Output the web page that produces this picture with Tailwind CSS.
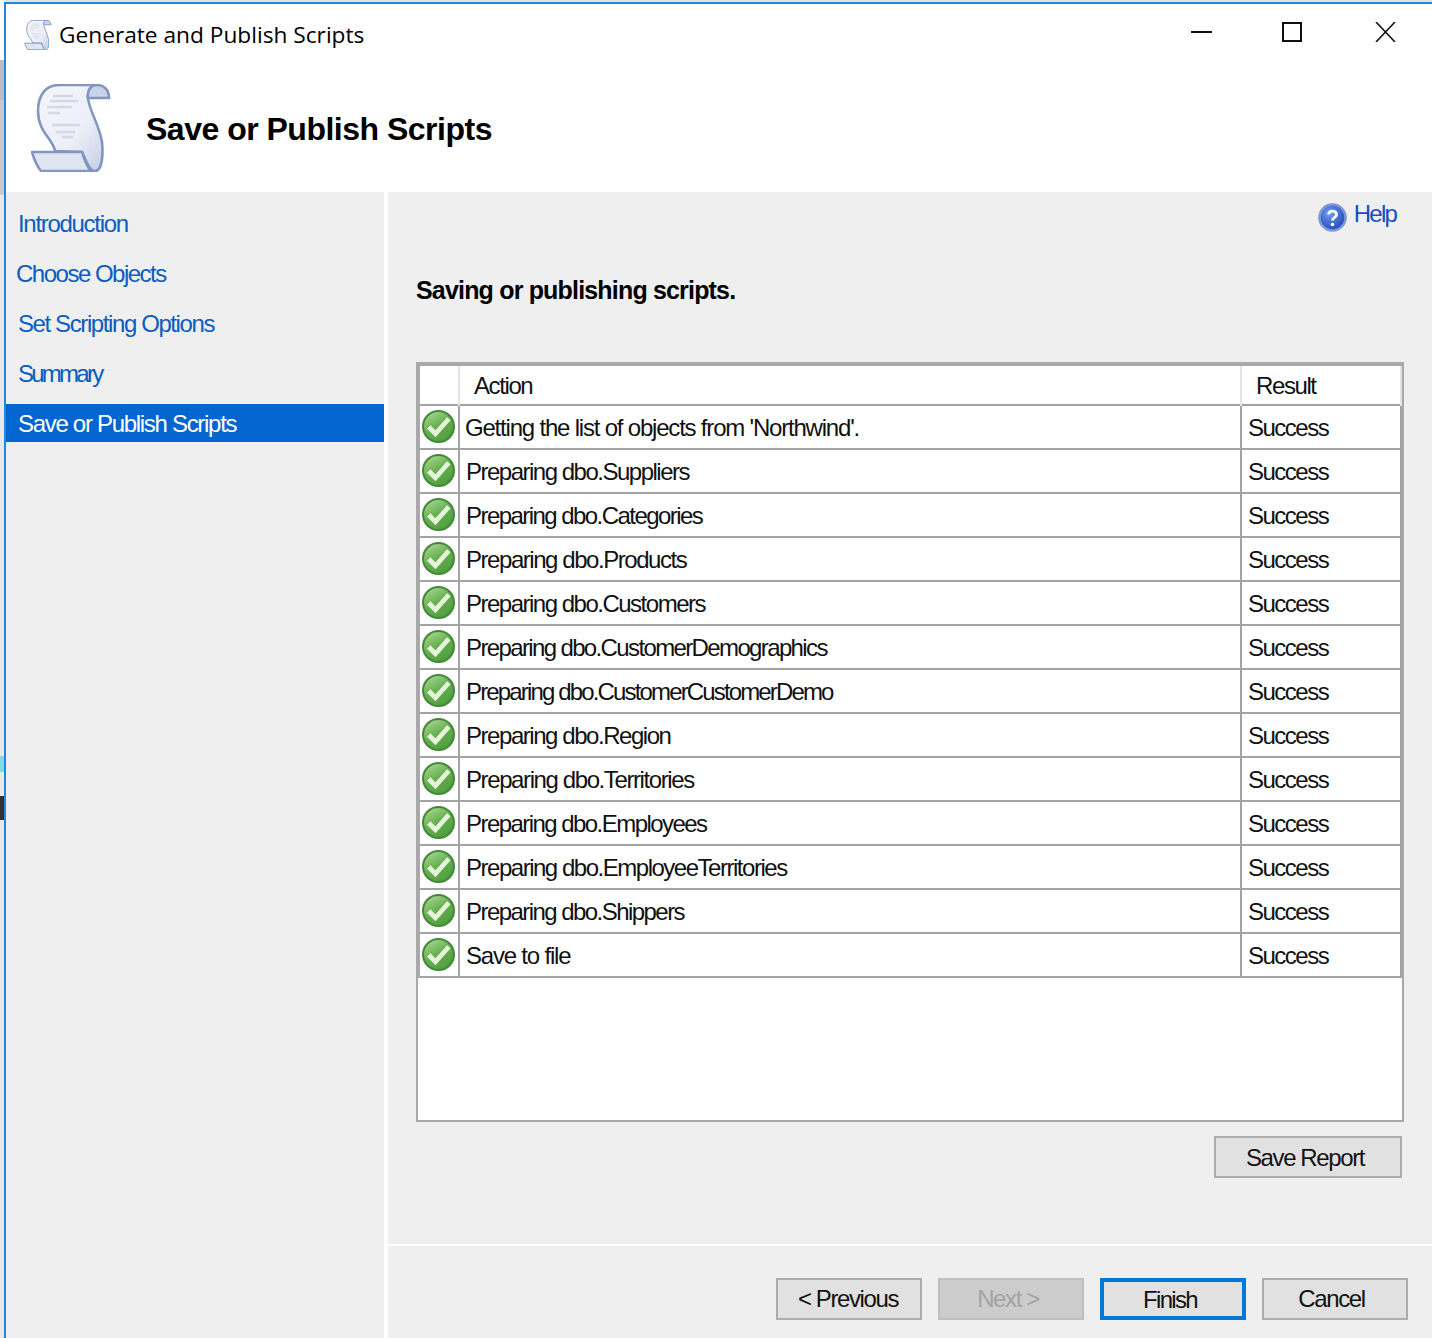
<!DOCTYPE html>
<html lang="en">
<head>
    <meta charset="UTF-8">
    <title>Generate and Publish Scripts</title>
    <script src="https://cdn.jsdelivr.net/npm/@tailwindcss/browser@4"></script>
</head>
<body class="bg-[#e4e4e4]">
    <svg width="0" height="0" class="absolute">
        <defs>
            <linearGradient id="scrollFill" x1="0" y1="0" x2="1" y2="1">
                <stop offset="0" stop-color="#f4f6fb"/>
                <stop offset="0.6" stop-color="#eceff7"/>
                <stop offset="1" stop-color="#c3cde4"/>
            </linearGradient>
            <linearGradient id="okFill" x1="0.2" y1="0" x2="0.8" y2="1">
                <stop offset="0" stop-color="#a8d892"/>
                <stop offset="0.5" stop-color="#62ad4c"/>
                <stop offset="1" stop-color="#4f9a3c"/>
            </linearGradient>
            <radialGradient id="helpFill" cx="0.4" cy="0.35" r="0.7">
                <stop offset="0" stop-color="#6f9bf0"/>
                <stop offset="1" stop-color="#1c47b8"/>
            </radialGradient>
            <symbol id="scroll" viewBox="0 0 80 88">
                <path d="M24 67C22 55 7 48 7 27 7 12 14 1 28 1L66 1C60 1 56 6 57 14 58 26 68 40 71 58 72 68 72 87 64 87 58 87 56 78 51 68Z" fill="url(#scrollFill)" stroke="#8296bf" stroke-width="2.6"/>
                <path d="M66 1C73 1 78 6 78 14L57 14C56 6 60 1 66 1Z" fill="#c9d3e9" stroke="#8296bf" stroke-width="2.6"/>
                <path d="M1 68L51 68C53 75 55 82 60 87L10 87C6 82 3 75 1 68Z" fill="#dfe5f2" stroke="#8296bf" stroke-width="2.6"/>
                <path d="M22 12H42M19 17H47M16 23H41M17 29H29M21 41H49M25 48H44M31 53H42" stroke="#d3d8e3" stroke-width="2.6" fill="none"/>
            </symbol>
            <symbol id="ok" viewBox="0 0 32 32">
                <circle cx="16" cy="16" r="15" fill="url(#okFill)" stroke="#44893a" stroke-width="2"/>
                <path d="M6.5 16.5L13 23L26 8.5" fill="none" stroke="#e6f4de" stroke-width="4.6"/>
            </symbol>
        </defs>
    </svg>

    <!-- bits of whatever sits behind the dialog -->
    <div class="absolute left-0 top-0 w-[4px] h-[1338px] flex flex-col bg-[#e8e8e8]">
        <div class="h-[60px] bg-white"></div>
        <div class="h-[40px] bg-[#bdbdc9]"></div>
        <div class="h-[95px] bg-[#cacaca]"></div>
        <div class="h-[561px]"></div>
        <div class="h-[16px] bg-[#7fdce0]"></div>
        <div class="h-[24px]"></div>
        <div class="h-[24px] bg-[#333333]"></div>
    </div>

    <div class="relative w-[1432px] h-[1338px] pl-[4px] pt-[2px] overflow-hidden">
        <div class="h-full border-l-2 border-t-2 border-[#1e88e0] bg-white flex flex-col">
            <!-- Title bar -->
            <div class="h-[60px] flex items-center justify-between pl-[18px] pr-[36px] shrink-0">
                <div class="flex items-center gap-[7px] pt-[2px]">
                    <svg class="w-[28px] h-[30px] blur-[0.3px]"><use href="#scroll"/></svg>
                    <span class="text-[22.7px] text-black font-['Open_Sans',sans-serif]">Generate and Publish Scripts</span>
                </div>
                <div class="flex items-center gap-[70px] pb-[4px]">
                    <svg width="21" height="20" viewBox="0 0 21 20"><path d="M0 10H21" stroke="#111" stroke-width="2"/></svg>
                    <svg width="20" height="20" viewBox="0 0 20 20"><rect x="1" y="1" width="18" height="18" fill="none" stroke="#111" stroke-width="2"/></svg>
                    <svg width="21" height="20" viewBox="0 0 21 20" class="ml-[3px]"><path d="M1 0L20 20M20 0L1 20" stroke="#111" stroke-width="1.6"/></svg>
                </div>
            </div>

            <!-- Header -->
            <div class="h-[128px] flex items-center pl-[25px] shrink-0">
                <svg class="w-[80px] h-[88px] blur-[0.5px]"><use href="#scroll"/></svg>
                <h1 class="ml-[35px] mt-[2px] text-[32px] font-bold tracking-[-0.5px] text-black font-['Liberation_Sans',sans-serif]">Save or Publish Scripts</h1>
            </div>

            <div class="flex-1 flex font-['Liberation_Sans',sans-serif] text-[24px] tracking-[-1.4px]">
                <!-- Sidebar -->
                <nav class="w-[378px] bg-[#efefef] pt-[12px] flex flex-col gap-[12px] text-[#0a5cc2]">
                    <a class="h-[38px] leading-[40px] pl-[12px] tracking-[-1.3px]">Introduction</a>
                    <a class="h-[38px] leading-[40px] pl-[10px] tracking-[-1.5px]">Choose Objects</a>
                    <a class="h-[38px] leading-[40px] pl-[12px] tracking-[-1.4px]">Set Scripting Options</a>
                    <a class="h-[38px] leading-[40px] pl-[12px] tracking-[-2.75px]">Summary</a>
                    <a class="h-[38px] leading-[40px] pl-[12px] tracking-[-1.3px] bg-[#0366d0] text-white">Save or Publish Scripts</a>
                </nav>

                <!-- Main -->
                <main class="ml-[4px] flex-1 flex flex-col bg-[#efefef]">
                    <div class="h-[1054px] border-b-2 border-white pl-[28px] pr-[28px] flex flex-col">
                        <div class="h-[46px] pt-[8px] pr-[8px] flex justify-end items-start">
                            <div class="flex items-center gap-[7px] text-[#1a4dc4]">
                                <svg width="29" height="29" viewBox="0 0 29 29" class="mt-[2px]">
                                    <circle cx="14.5" cy="14.5" r="13" fill="url(#helpFill)" stroke="#7d97d2" stroke-width="2.6"/>
                                    <path d="M10.5 11.5C10.5 7 18.5 7 18.5 11.5C18.5 14.5 14.5 14.5 14.5 17.5" fill="none" stroke="#fff" stroke-width="2.8"/>
                                    <circle cx="14.5" cy="21.5" r="1.8" fill="#fff"/>
                                </svg>
                                <span class="leading-[28px] mb-[4px] tracking-[-1.8px]">Help</span>
                            </div>
                        </div>
                        <p class="mt-[35px] h-[34px] leading-[34px] text-[25px] font-bold tracking-[-0.82px] text-black">Saving or publishing scripts.</p>

                        <!-- Results table -->
                        <div class="mt-[55px] w-[988px] h-[760px] bg-white border-2 border-[#a9a9a9] text-[#111]">
                            <div class="w-[984px] border-t-2 border-l-2 border-[#a9a9a9]">
                                <div class="h-[40px] grid grid-cols-[40px_782px_160px] border-b-2 border-[#a3a3a3]">
                                    <div class="border-r-2 border-[#e4e4e4]"></div>
                                    <div class="border-r-2 border-[#e4e4e4] pl-[14px] leading-[40px]">Action</div>
                                    <div class="pl-[14px] leading-[40px] border-r-2 border-[#e4e4e4]">Result</div>
                                </div>
                                <div id="rows"></div>
                            </div>
                        </div>

                        <div class="mt-[14px] flex justify-end pr-[2px]">
                            <button class="w-[188px] h-[42px] pr-[6px] pt-[1px] bg-[#e1e1e1] border-2 border-[#adadad] text-[#111]">Save Report</button>
                        </div>
                    </div>

                    <div class="flex justify-end gap-[16px] pt-[32px] pr-[24px] text-[#111]">
                        <button class="w-[146px] h-[42px] pr-[2px] bg-[#e1e1e1] border-2 border-[#adadad]">&lt; Previous</button>
                        <button class="w-[146px] h-[42px] pr-[6px] bg-[#cccccc] border-2 border-[#bfbfbf] text-[#a3a3a3]">Next &gt;</button>
                        <button class="w-[146px] h-[42px] pr-[6px] bg-[#e1e1e1] border-4 border-[#0078d7] tracking-[-1.7px]">Finish</button>
                        <button class="w-[146px] h-[42px] pr-[7px] bg-[#e1e1e1] border-2 border-[#adadad]">Cancel</button>
                    </div>
                </main>
            </div>
        </div>
    </div>

    <script>
        const actions = [
            ["Getting the list of objects from 'Northwind'.", "pl-[5px] tracking-[-1.2px]"],
            ["Preparing dbo.Suppliers", "pl-[6px] tracking-[-1.5px]"],
            ["Preparing dbo.Categories", "pl-[6px] tracking-[-1.55px]"],
            ["Preparing dbo.Products", "pl-[6px] tracking-[-1.45px]"],
            ["Preparing dbo.Customers", "pl-[6px] tracking-[-1.5px]"],
            ["Preparing dbo.CustomerDemographics", "pl-[6px] tracking-[-1.63px]"],
            ["Preparing dbo.CustomerCustomerDemo", "pl-[6px] tracking-[-1.85px]"],
            ["Preparing dbo.Region", "pl-[6px] tracking-[-1.45px]"],
            ["Preparing dbo.Territories", "pl-[6px] tracking-[-1.4px]"],
            ["Preparing dbo.Employees", "pl-[6px] tracking-[-1.55px]"],
            ["Preparing dbo.EmployeeTerritories", "pl-[6px] tracking-[-1.48px]"],
            ["Preparing dbo.Shippers", "pl-[6px] tracking-[-1.55px]"],
            ["Save to file", "pl-[6px] tracking-[-1.2px]"]
        ];
        document.getElementById('rows').innerHTML = actions.map(([action, cls]) => `
            <div class="h-[44px] grid grid-cols-[40px_782px_160px] border-b-2 border-[#a3a3a3]">
                <div class="border-r-2 border-[#a3a3a3] pl-[2px] pt-[4px]">
                    <svg class="w-[33px] h-[33px]"><use href="#ok"/></svg>
                </div>
                <div class="border-r-2 border-[#a3a3a3] leading-[44px] whitespace-nowrap ${cls}">${action}</div>
                <div class="border-r-2 border-[#a3a3a3] pl-[6px] leading-[44px] tracking-[-1.5px]">Success</div>
            </div>`).join('');
    </script>
</body>
</html>
